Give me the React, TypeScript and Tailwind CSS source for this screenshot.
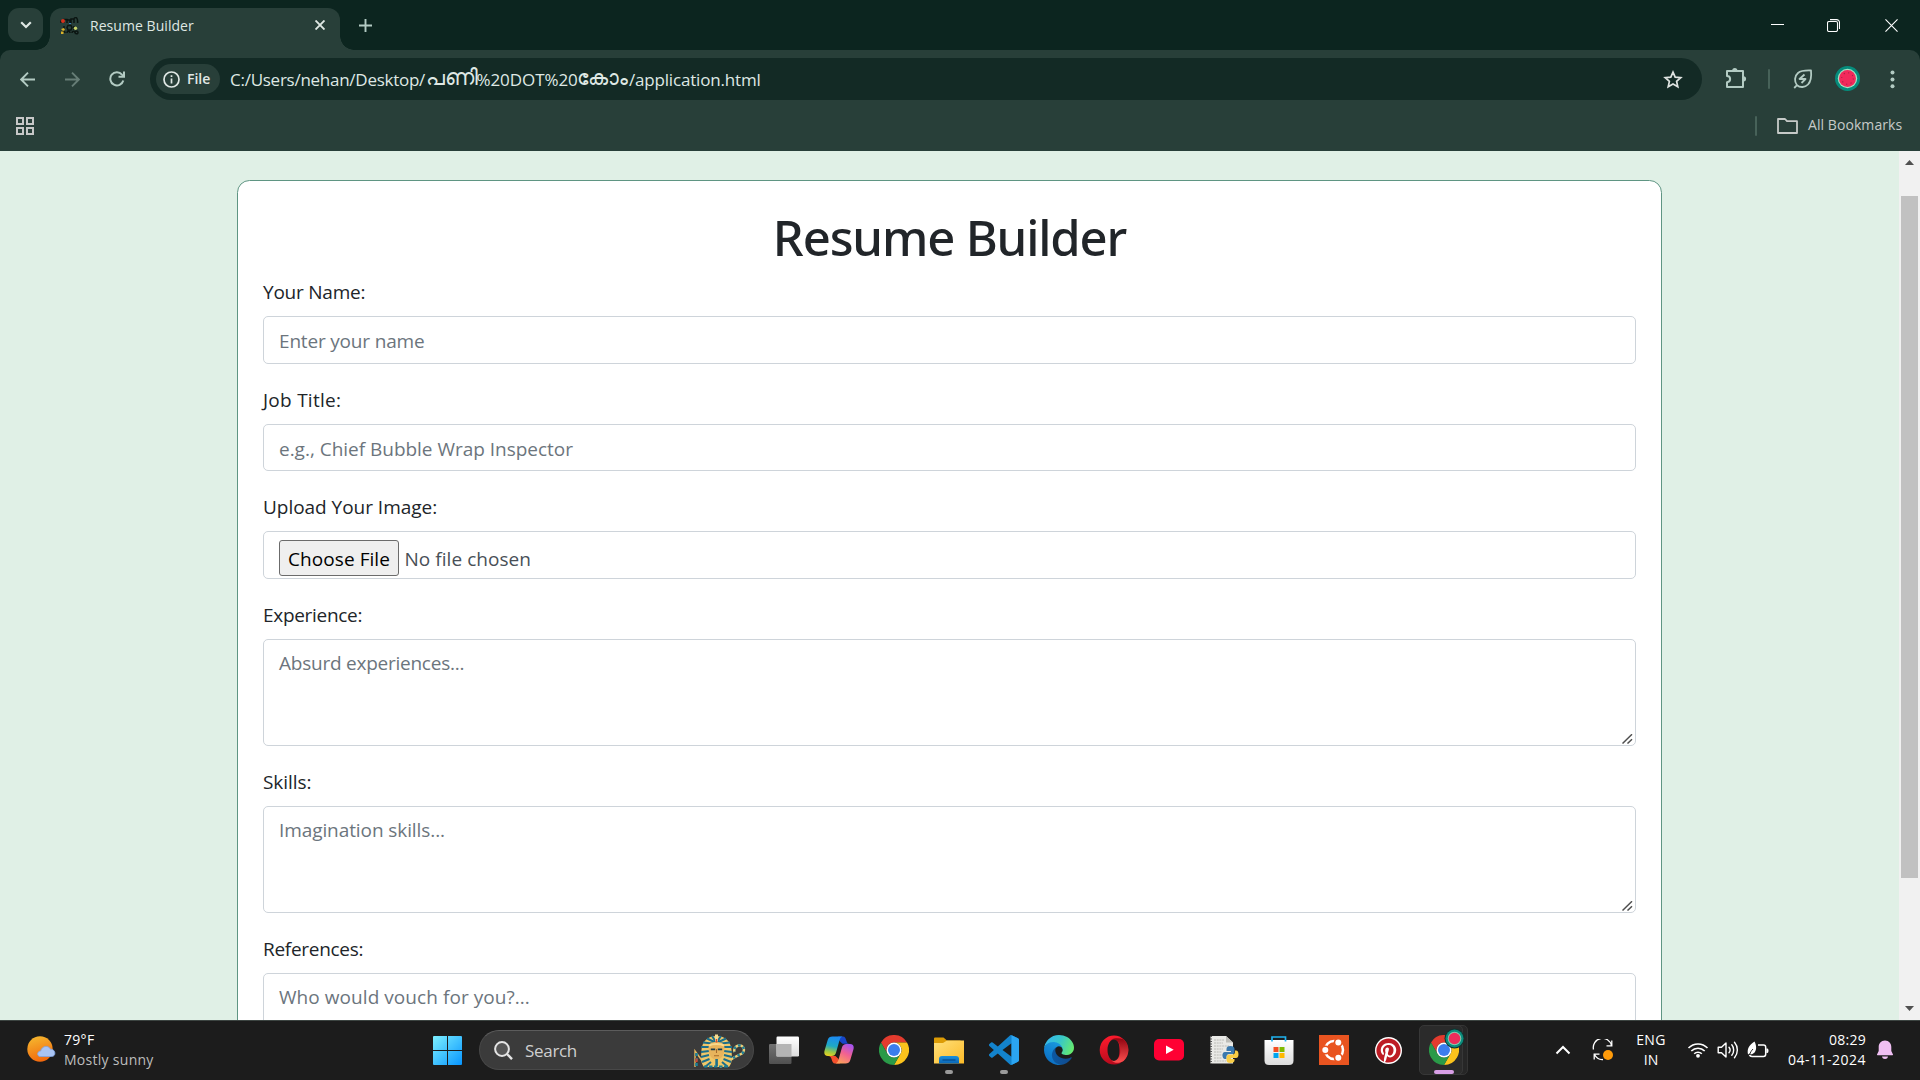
import type { ReactNode } from 'react';
import { FaPinterest } from 'react-icons/fa';

function ChromeLogo({ size }: { size: number }) {
  return (
    <svg width={size} height={size} viewBox="0 0 48 48">
      <path d="M3.2 12A24 24 0 0 1 44.8 12L24 12A12 12 0 0 0 13.6 30Z" fill="#e33b2e" />
      <path d="M44.8 12A24 24 0 0 1 24 48L34.4 30A12 12 0 0 0 24 12Z" fill="#fcc31c" />
      <path d="M24 48A24 24 0 0 1 3.2 12L13.6 30A12 12 0 0 0 34.4 30Z" fill="#2a9a48" />
      <circle cx="24" cy="24" r="12" fill="#fff" />
      <circle cx="24" cy="24" r="9.6" fill="#3b7ded" />
    </svg>
  );
}

function Favicon() {
  return (
    <svg width="20" height="18" viewBox="0 0 20 18" fill="none">
      <path d="M1 6V3.500M4 6V2.500h3V6M7 3h3v3M11 6V2h3v4M14 1.500c2-2 4-1 3.600 4.500M8 8.500h3l1 2-1 2.500H8l-1-2.500zM4 9v4M14 9v4M2 16c0-2.500 3-2.500 3 0M7 16c0-2.500 3-2.500 3 0M12 16c0-2.500 3-2.500 3 0M15 15.500c0-2 3-2 3 0s-3 1.500-3 0" stroke="#0b1512" strokeWidth="1.500" />
      <circle cx="3" cy="4" r="2" fill="#d4321d" />
      <path d="M9 6.500h2" stroke="#3b7fc4" strokeWidth="1.200" />
      <circle cx="15.500" cy="11.200" r="1.700" fill="#c7d36b" />
      <path d="M1 12l3-1 1 2-2 1zM1 14.500h2.500V17H1z" fill="#d9b32a" />
    </svg>
  );
}

function TitleBar() {
  return (
    <div className="flex h-[50px] items-start bg-[#0c251f]">
      <div className="ml-2 mt-2 flex h-[34px] w-[35px] items-center justify-center rounded-[11px] bg-[#283f39]">
        <svg width="12" height="8" viewBox="0 0 12 8" fill="none" stroke="#dfe8e4" strokeWidth="2.200">
          <path d="M1.200 1.200L6 6L10.800 1.200" />
        </svg>
      </div>
      <div className="relative ml-[7px] mt-2 flex h-[42px] w-[290px] items-center rounded-t-[12px] bg-[#283f39] pb-[7px] pl-[10px]">
        <span className="absolute -left-[14px] bottom-0 h-[14px] w-[14px] bg-[radial-gradient(circle_at_0_0,transparent_13.500px,#283f39_14px)]" />
        <span className="absolute -right-[14px] bottom-0 h-[14px] w-[14px] bg-[radial-gradient(circle_at_100%_0,transparent_13.500px,#283f39_14px)]" />
        <Favicon />
        <span className="ml-[10px] whitespace-nowrap text-[14px] leading-[20px] tracking-[0.05px] text-[#dfe7e3]">Resume Builder</span>
        <svg className="absolute left-[265px] top-[12px]" width="10" height="10" viewBox="0 0 10 10" stroke="#dfe8e4" strokeWidth="1.900">
          <path d="M0.500 0.500L9.500 9.500M9.500 0.500L0.500 9.500" />
        </svg>
      </div>
      <svg className="ml-[19px] mt-[18.500px]" width="13" height="13" viewBox="0 0 13 13" stroke="#b3cbc3" strokeWidth="1.900">
        <path d="M6.500 0V13M0 6.500H13" />
      </svg>
      <div className="ml-auto flex items-center pr-[22px] pt-[18px]">
        <svg className="mr-[43px]" width="13" height="14" viewBox="0 0 13 14"><path d="M0 6.500H13" stroke="#fff" /></svg>
        <svg className="mr-[45px]" width="13" height="13" viewBox="0 0 13 13" fill="none" stroke="#fff" strokeWidth="1.100">
          <rect x="0.500" y="2.500" width="10" height="10" rx="1.500" />
          <path d="M3 0.600h6.500a3 3 0 0 1 3 3V10" />
        </svg>
        <svg width="13" height="13" viewBox="0 0 14 14" stroke="#fff" strokeWidth="1.200"><path d="M0.500 0.500L13.500 13.500M13.500 0.500L0.500 13.500" /></svg>
      </div>
    </div>
  );
}

function AddressBar() {
  return (
    <div className="flex h-[58px] items-center">
      <svg className="ml-5" width="15" height="15" viewBox="0 0 15 15" fill="none" stroke="#b3cbc3" strokeWidth="1.900"><path d="M15 7.500H1.500M8 0.700L1.200 7.500L8 14.300" /></svg>
      <svg className="ml-[30px]" width="15" height="15" viewBox="0 0 15 15" fill="none" stroke="#667d76" strokeWidth="1.900"><path d="M0 7.500H13.500M7 0.700L13.800 7.500L7 14.300" /></svg>
      <svg className="ml-[29px] mt-[-1px]" width="16" height="16" viewBox="0 0 16 16" fill="none" stroke="#b3cbc3" strokeWidth="2">
        <path d="M14.300 9.500A6.600 6.600 0 1 1 13 3.600L14.500 5.300" />
        <path d="M15 0.500V5.800H9.500" />
      </svg>
      <div className="ml-[25px] flex h-[42px] w-[1552px] items-center rounded-full bg-[#132a25] pl-[6px] pr-[19px]">
        <div className="flex h-[30px] w-[64px] items-center rounded-full bg-[#283f39] pl-[7px]">
          <svg width="17" height="17" viewBox="0 0 17 17" fill="none" stroke="#e0e8e5" strokeWidth="1.700">
            <circle cx="8.500" cy="8.500" r="7.500" /><path d="M8.500 7.500V12.500M8.500 4.200V6" />
          </svg>
          <span className="ml-[7px] mt-[-1px] text-[14px] font-semibold leading-[20px] text-[#e0e8e5]">File</span>
        </div>
        <div className="ml-[10px] mt-px flex h-[30px] items-center whitespace-nowrap text-[17px] leading-[30px] text-[#dfe8e4]">
          <span className="w-[195.500px] tracking-[-0.260px]">C:/Users/nehan/Desktop/</span>
          <span className="mt-[-6px] w-[51px] text-[21.500px] font-light leading-[30px]">പണി</span>
          <span className="w-[100.500px] tracking-[-0.080px]">%20DOT%20</span>
          <span className="mt-[-6px] w-[52px] text-[21px] font-light leading-[30px]">കോം</span>
          <span className="tracking-[-0.180px]">/application.html</span>
        </div>
        <svg className="ml-auto" width="20" height="19" viewBox="0 0 20 19" fill="none" stroke="#dfe3e1" strokeWidth="1.700">
          <path d="M10 2.200L12.200 7.200L17.800 7.700L13.600 11.400L14.800 16.800L10 14L5.200 16.800L6.400 11.400L2.200 7.700L7.800 7.200Z" />
        </svg>
      </div>
      <svg className="ml-[23px] mt-[-2px]" width="22" height="22" viewBox="0 0 22 22" fill="none" stroke="#b3cbc3" strokeWidth="2" strokeLinejoin="round">
        <path d="M2 4H18V20H2V15.200C6.200 15 6.200 9.200 2 9Z" />
        <path d="M7.200 3.500a2.600 2.600 0 0 1 5.200 0zM18.500 9.200a2.600 2.600 0 0 1 0 5.200z" fill="#b3cbc3" stroke="none" />
      </svg>
      <div className="ml-[21px] h-5 w-[2px] rounded bg-[#476259]" />
      <svg className="ml-[23px]" width="20" height="20" viewBox="0 0 20 20" fill="none" stroke="#b3cbc3" strokeWidth="1.800" strokeLinejoin="round">
        <path d="M1.200 19L4 16.200M4 16.200C1 12.500 1.500 7 5 4C8 1.500 13 1.300 18 1.500C18.500 6.500 18.300 12 15 15.500C12 18.600 7 18.800 4 16.200Z" />
        <path d="M11.500 5.500L6.500 10H12.500L8.500 14" />
      </svg>
      <svg className="ml-[22px] mt-[-1px]" width="25" height="25" viewBox="0 0 25 25">
        <circle cx="12.500" cy="12.500" r="12.500" fill="#058c7c" />
        <circle cx="12.500" cy="12.500" r="9.700" fill="#a6e3c4" />
        <circle cx="12.500" cy="12.500" r="8.500" fill="#f2295b" />
        <circle cx="12.500" cy="12.500" r="5.800" fill="none" stroke="#a82049" strokeWidth="1.100" strokeDasharray="1.100 3.450" />
      </svg>
      <svg className="ml-[30px]" width="5" height="19" viewBox="0 0 5 19" fill="#b3cbc3"><circle cx="2.500" cy="2.500" r="2" /><circle cx="2.500" cy="9.500" r="2" /><circle cx="2.500" cy="16.300" r="2" /></svg>
    </div>
  );
}

function BookmarksBar() {
  return (
    <div className="flex h-[43px] items-center pb-[9px] pl-[15.500px] pr-[18px]">
      <svg className="mt-[1px]" width="18" height="18" viewBox="0 0 18 18" fill="none" stroke="#c6c7c7" strokeWidth="2">
        <path d="M1 1h6v6H1zM11 1h6v6h-6zM1 11h6v6H1zM11 11h6v6h-6z" />
      </svg>
      <div className="ml-auto mt-[2px] h-5 w-[2px] rounded bg-[#476259]" />
      <svg className="ml-5 mt-[2px]" width="21" height="16" viewBox="0 0 21 16" fill="none" stroke="#c6cac8" strokeWidth="1.800" strokeLinejoin="round"><path d="M1 1H8L10 3.200H20V15H1Z" /></svg>
      <span className="ml-[10px] w-[94px] whitespace-nowrap text-[14px] leading-[20px] tracking-[0.070px] text-[#c6cac8]">All Bookmarks</span>
    </div>
  );
}

function Field({ label, track, children }: { label: string; track: string; children: ReactNode }) {
  return (
    <div className="mb-5">
      <div className={`mb-[10px] h-[30px] whitespace-nowrap leading-[32px] ${track}`}>{label}</div>
      {children}
    </div>
  );
}

function Input({ text, track }: { text: string; track: string }) {
  return (
    <div className="h-[47.500px] rounded-[5px] border border-[#ced4da] px-[15px] pt-[9px]">
      <div className={`h-[30px] whitespace-nowrap leading-[30px] text-[#6c757d] ${track}`}>{text}</div>
    </div>
  );
}

function Area({ text, track }: { text: string; track: string }) {
  return (
    <div className="flex h-[107px] justify-between rounded-[5px] border border-[#ced4da] pb-px pl-[15px] pr-[2px] pt-2">
      <div className={`h-[30px] whitespace-nowrap leading-[31px] text-[#6c757d] ${track}`}>{text}</div>
      <svg className="self-end" width="11" height="10" viewBox="0 0 11 10" stroke="#4f4f4f" strokeWidth="1.500">
        <path d="M0.500 9.500L10 0.300M5.500 9.500L10 5.200" />
      </svg>
    </div>
  );
}

function Page() {
  return (
    <div className="flex h-[869px] bg-[#e0f0e6]">
      <div className="h-full w-[1899px] overflow-hidden pl-[237px] pt-[29px]">
        <div className="h-[1100px] w-[1425px] rounded-[12.500px] border border-[#5f9583] bg-white p-[25px] text-[19px] text-[#212529]">
          <h1 className="mb-[10.300px] h-[60px] whitespace-nowrap text-center font-['Noto_Sans',sans-serif] text-[49px] font-medium leading-[62px] tracking-[-1.150px]">Resume Builder</h1>
          <Field label="Your Name:" track="tracking-[-0.230px]"><Input text="Enter your name" track="tracking-[-0.180px]" /></Field>
          <Field label="Job Title:" track="tracking-[0.260px]"><Input text="e.g., Chief Bubble Wrap Inspector" track="tracking-[-0.020px]" /></Field>
          <Field label="Upload Your Image:" track="tracking-[-0.030px]">
            <div className="flex h-[47.500px] items-start rounded-[5px] border border-[#ced4da] px-[15px] pt-2">
              <div className="h-[36px] w-[120px] whitespace-nowrap rounded-[3px] border border-[#6b6b6b] bg-[#efefef] text-center leading-[36px] tracking-[0.070px] text-black">Choose File</div>
              <div className="ml-[5.500px] whitespace-nowrap leading-[38px] tracking-[0.050px] text-[#495057]">No file chosen</div>
            </div>
          </Field>
          <Field label="Experience:" track="tracking-[-0.300px]"><Area text="Absurd experiences..." track="tracking-[-0.240px]" /></Field>
          <Field label="Skills:" track="tracking-[-0.060px]"><Area text="Imagination skills..." track="tracking-[-0.090px]" /></Field>
          <Field label="References:" track="tracking-[-0.290px]"><Area text="Who would vouch for you?..." track="tracking-[0.060px]" /></Field>
        </div>
      </div>
      <div className="flex w-[21px] flex-col items-center bg-[#f1f1f1]">
        <svg className="mt-[9px]" width="9" height="5" viewBox="0 0 9 5" fill="#505050"><path d="M0 5L4.500 0L9 5Z" /></svg>
        <div className="mt-[31px] h-[682px] w-[17px] bg-[#c1c1c1]" />
        <svg className="mt-[128px]" width="9" height="5" viewBox="0 0 9 5" fill="#505050"><path d="M0 0L4.500 5L9 0Z" /></svg>
      </div>
    </div>
  );
}

function Pharaoh() {
  return (
    <svg width="52" height="34" viewBox="0 0 52 34" fill="none">
      <path d="M1 33V17L12 32" stroke="#e3b85f" strokeWidth="1.400" />
      <path d="M2.500 19v13" stroke="#1d7f97" strokeWidth="2.600" strokeDasharray="3 2" />
      <path d="M2.500 24.500v3.500" stroke="#d1462f" strokeWidth="2.200" />
      <path d="M26 33L40 23.500L48 19.500C52 16 49 10.500 44.500 11.500C41.500 12.300 39.500 15 40.500 18" stroke="#f0cf78" strokeWidth="2.400" />
      <path d="M35 27L40 23.500L48 19.500C52 16 49 10.500 44.500 11.500C41.500 12.300 39.500 15 40.500 18" stroke="#1d7f97" strokeWidth="2.400" strokeDasharray="2.500 2.500" />
      <path d="M22.500 2C13.500 2 8 8 7.500 16C7.200 22 6 28 10 33H35C39 28 37.800 22 37.500 16C37 8 31.500 2 22.500 2Z" fill="#efc768" />
      <path d="M22.500 10L9 8.500M22.500 9L13 4.500M22 8L18 2M23 8L27 2M22.500 9L32 4.500M22.500 10L36 8.500M15 13L7 13M15 17L7 18M15 21L7 23M15.500 25L8 28M17 28L11 33M30 13L38 13M30 17L38 18M30 21L38 23M29.500 25L37 28M28 28L34 33" stroke="#1b6f8c" strokeWidth="2" />
      <path d="M14.500 14C14.500 9.500 17.500 8 22.500 8S30.500 9.500 30.500 14C30.500 20 28 25.500 22.500 25.500S14.500 20 14.500 14Z" fill="#e8b45c" />
      <path d="M15 11.500c4-2 11-2 15 0" stroke="#f7d98c" strokeWidth="2" />
      <path d="M16.800 15.300h4.400M23.800 15.300h4.400" stroke="#183c4c" strokeWidth="1.700" />
      <path d="M22.500 15v4M20 21.700h5" stroke="#a56a2a" strokeWidth="1.100" />
      <path d="M21.300 25h2.600v7h-2.600z" fill="#1b6f8c" />
      <path d="M22.500 0.500v7" stroke="#f6dc92" strokeWidth="3" />
      <path d="M22.500 5v3.500" stroke="#d1462f" strokeWidth="1.600" />
      <path d="M10 32.500H35" stroke="#1d7f97" strokeWidth="2" strokeDasharray="3.500 1.500" />
    </svg>
  );
}

function Cell({ children, open }: { children: ReactNode; open?: boolean }) {
  return (
    <div className="relative flex h-[60px] w-[55px] items-center justify-center">
      {children}
      {open && <span className="absolute bottom-[6px] left-[24px] h-1 w-2 rounded-full bg-[#9a9a9a]" />}
    </div>
  );
}

function Apps() {
  return (
    <div className="ml-[2px] flex">
      <Cell>
        <svg width="30" height="30" viewBox="0 0 30 30">
          <defs>
            <linearGradient id="tv" x1="0" y1="0" x2="0" y2="1"><stop offset="0" stopColor="#fff" /><stop offset="1" stopColor="#dcdcdc" /></linearGradient>
            <linearGradient id="tv2" x1="0" y1="0" x2="0" y2="1"><stop offset="0" stopColor="#737373" /><stop offset="1" stopColor="#505050" /></linearGradient>
          </defs>
          <rect x="0" y="9" width="22.500" height="20" rx="1.200" fill="url(#tv2)" />
          <rect x="7.500" y="1.500" width="22.500" height="20" rx="1.200" fill="url(#tv)" />
          <path d="M7.500 9h15v12.500h-15z" fill="#b4b4b4" />
        </svg>
      </Cell>
      <Cell>
        <svg width="30" height="30" viewBox="0 0 30 30">
          <defs>
            <linearGradient id="cp1" x1="0.300" y1="0" x2="0.100" y2="1"><stop offset="0" stopColor="#1c8df0" /><stop offset="0.450" stopColor="#1fa9c4" /><stop offset="0.750" stopColor="#9cc944" /><stop offset="1" stopColor="#f3d21b" /></linearGradient>
            <linearGradient id="cp2" x1="0.800" y1="0" x2="0.300" y2="1"><stop offset="0" stopColor="#a353f2" /><stop offset="0.500" stopColor="#f26191" /><stop offset="1" stopColor="#fba05c" /></linearGradient>
          </defs>
          <path d="M14 1.500H19C21 1.500 21.700 3.500 22.300 5.500C23 7.800 23.600 8.800 26 8.800H18.500L15.500 6Z" fill="#1746c9" />
          <path d="M16 28.500H11C9 28.500 8.300 26.500 7.700 24.500C7 22.200 6.400 21 4 21H11.500L14.500 24Z" fill="#f4502c" />
          <path d="M8.500 1.500H18.500C16.500 2 15.800 4 15 7L12.200 17C11.300 20 10 21 7.500 21H4C0.500 21 -0.200 18.500 0.600 15.500L3.700 5C4.600 2.400 6 1.500 8.500 1.500Z" fill="url(#cp1)" />
          <path d="M21.500 28.500H11.500C13.500 28 14.200 26 15 23L17.800 13C18.700 10 20 9 22.500 9H26C29.500 9 30.200 11.500 29.400 14.500L26.300 25C25.400 27.600 24 28.500 21.500 28.500Z" fill="url(#cp2)" />
        </svg>
      </Cell>
      <Cell><ChromeLogo size={30} /></Cell>
      <Cell open>
        <svg width="30" height="30" viewBox="0 0 30 30">
          <defs>
            <linearGradient id="fe" x1="0" y1="0" x2="1" y2="1"><stop offset="0" stopColor="#ffe07a" /><stop offset="1" stopColor="#fcba28" /></linearGradient>
            <linearGradient id="fe2" x1="0" y1="0" x2="0" y2="1"><stop offset="0" stopColor="#1a90dd" /><stop offset="1" stopColor="#0b66b5" /></linearGradient>
          </defs>
          <path d="M0 3.500Q0 2.500 1 2.500H9.500L13 5.500H26Q28 5.500 28 8V12H0Z" fill="#dd9c05" />
          <path d="M0 8H9L13 5.500H30V28.500H0Z" fill="url(#fe)" />
          <path d="M5 28.500V24Q5 21 8 21H22Q25 21 25 24V28.500Z" fill="url(#fe2)" />
          <path d="M8.500 25H21.500" stroke="#06498c" strokeWidth="1.200" />
        </svg>
      </Cell>
      <Cell open>
        <svg width="30" height="30" viewBox="0 0 24 24">
          <path fill="#1383cc" d="M23.150 2.587L18.210.210a1.494 1.494 0 0 0-1.705.290l-9.460 8.630-4.120-3.128a.999.999 0 0 0-1.276.057L.327 7.261A1 1 0 0 0 .326 8.740L3.899 12 .326 15.260a1 1 0 0 0 .001 1.479L1.650 17.940a.999.999 0 0 0 1.276.057l4.120-3.128 9.460 8.630a1.492 1.492 0 0 0 1.704.290l4.942-2.377A1.500 1.500 0 0 0 24 20.060V3.939a1.500 1.500 0 0 0-.850-1.352zm-5.146 14.861L10.826 12l7.178-5.448v10.896z" />
          <path fill="#2ba5f2" d="M18 .120L23.150 2.587A1.500 1.500 0 0 1 24 3.939V20.060a1.500 1.500 0 0 1-.850 1.350L18 23.900Z" />
        </svg>
      </Cell>
      <Cell>
        <svg width="30" height="30" viewBox="4.630 4.920 256 256">
          <defs>
            <linearGradient id="ed1" x1="0" y1="0.500" x2="1" y2="0.500"><stop offset="0" stopColor="#0c59a4" /><stop offset="1" stopColor="#114a8b" /></linearGradient>
            <linearGradient id="ed2" x1="0.800" y1="0" x2="0.300" y2="1"><stop offset="0" stopColor="#1b9de2" /><stop offset="0.500" stopColor="#1284d3" /><stop offset="1" stopColor="#0b6cc0" /></linearGradient>
            <linearGradient id="ed3" x1="0" y1="0.300" x2="1" y2="0.600"><stop offset="0" stopColor="#35b8f1" /><stop offset="0.500" stopColor="#38c7c8" /><stop offset="1" stopColor="#66eb6e" /></linearGradient>
          </defs>
          <path fill="url(#ed1)" d="M235.680 195.460a93.730 93.730 0 0 1-10.540 4.710 101.870 101.870 0 0 1-35.900 6.460c-47.320 0-88.540-32.550-88.540-74.320A31.480 31.480 0 0 1 117.130 105c-42.800 1.800-53.800 46.400-53.800 72.530 0 73.880 68.090 81.370 82.760 81.370 7.910 0 19.840-2.300 27-4.560l1.310-.440a128.340 128.340 0 0 0 66.600-52.800 4 4 0 0 0-5.320-5.640z" />
          <path fill="url(#ed2)" d="M110.340 246.340A79.200 79.200 0 0 1 87.600 225a80.720 80.720 0 0 1 29.530-120c3.120-1.470 8.450-4.130 15.540-4a32.350 32.350 0 0 1 25.690 13 31.880 31.880 0 0 1 6.360 18.660c0-.210 24.460-79.600-80-79.600-43.900 0-80 41.660-80 78.210a130.150 130.150 0 0 0 12.110 56 128 128 0 0 0 156.380 67.110 75.550 75.550 0 0 1-62.780-8z" />
          <path fill="url(#ed3)" d="M156.940 153.780c-.810 1.050-3.300 2.500-3.300 5.660 0 2.610 1.700 5.120 4.720 7.230 14.380 10 41.490 8.680 41.560 8.680a59.560 59.560 0 0 0 30.270-8.350 61.380 61.380 0 0 0 30.430-52.880c.260-22.410-8-37.310-11.340-43.910C228.090 28.760 182.350 4.920 132.610 4.920a128 128 0 0 0-128 126.200c.480-36.540 36.800-66.050 80-66.050 3.500 0 23.460.340 42 10.070 16.340 8.580 24.900 18.940 30.850 29.210 6.180 10.670 7.280 24.150 7.280 29.520s-2.740 13.330-7.800 19.910z" />
        </svg>
      </Cell>
      <Cell>
        <svg width="30" height="30" viewBox="0 0 30 30">
          <defs>
            <linearGradient id="op1" x1="0.300" y1="0" x2="0.500" y2="1"><stop offset="0" stopColor="#ff1b2d" /><stop offset="1" stopColor="#b50a1c" /></linearGradient>
            <linearGradient id="op2" x1="0" y1="0" x2="0" y2="1"><stop offset="0" stopColor="#8f0410" /><stop offset="1" stopColor="#ff5050" /></linearGradient>
          </defs>
          <path fillRule="evenodd" fill="url(#op1)" d="M15 0.500A14.300 14.500 0 1 0 15 29.500A14.300 14.500 0 1 0 15 0.500ZM15.500 4C19.500 4 20.500 10 20.500 15S19.500 26 15.500 26S8.500 21 8.500 15S11.500 4 15.500 4Z" />
          <path fill="url(#op2)" d="M12 4.800C16 2.500 20.500 3 24.500 4.200A14.300 14.500 0 0 1 24.500 26C20.500 28.500 15.500 28.500 12.500 25.500C17.500 27.500 21.500 22 21.500 15S17.500 3 12 4.800Z" />
        </svg>
      </Cell>
      <Cell>
        <svg width="30" height="22" viewBox="0 0 30 22"><rect width="30" height="21.500" rx="5" fill="#ff0033" /><path d="M12 6.500L19.700 10.800L12 15Z" fill="#fff" /></svg>
      </Cell>
      <Cell>
        <svg width="30" height="30" viewBox="0 0 30 30">
          <path d="M1.500 1H17L24 7.500V28.500H1.500Z" fill="#e9e9e6" />
          <path d="M17 1L24 7.500H17Z" fill="#bdbdb8" />
          <path d="M2 1V29" stroke="#555" strokeWidth="2" strokeDasharray="1 1.500" />
          <path d="M5 5H15M5 8H14M5 11H20M5 14H14M5 17H13M5 20H14M5 23H13M5 26H17" stroke="#b5b5b1" strokeWidth="0.900" strokeDasharray="2 0.700" />
          <path d="M21.500 11C18.500 11 17.500 12 17.500 14V16H22V17H16C14 17 13.500 18.500 13.500 20.500S14.500 24 16 24H17.500V22C17.500 20 18.500 19 20.500 19H23.500C25 19 25.500 18 25.500 17V14C25.500 12 24 11 21.500 11Z" fill="#3b79ad" />
          <path d="M21.500 28C18.700 28 17.500 27 17.500 25V22.500C17.500 20.500 18.500 19.500 20.500 19.500H23.500C25 19.500 26 18.500 26 17V15.500H27C28.700 15.500 29.500 17 29.500 19.200S28.700 23 27 23H22V24H25.500V25.500C25.500 27 24 28 21.500 28Z" fill="#f8cd45" />
        </svg>
      </Cell>
      <Cell>
        <svg width="30" height="30" viewBox="0 0 30 30">
          <defs><linearGradient id="ms" x1="0" y1="0" x2="0" y2="1"><stop offset="0" stopColor="#fff" /><stop offset="1" stopColor="#dcdcdc" /></linearGradient></defs>
          <path d="M0.500 5H29.500V25.500Q29.500 30 25 30H5Q0.500 30 0.500 25.500Z" fill="url(#ms)" />
          <path d="M8 6.500V2H21.500V6.500" fill="none" stroke="#1fb2ee" strokeWidth="1.700" />
          <path fill="#f25022" d="M9.500 12h5v5h-5z" /><path fill="#7fba00" d="M15.500 12h5v5h-5z" />
          <path fill="#00a4ef" d="M9.500 18h5v5h-5z" /><path fill="#ffb900" d="M15.500 18h5v5h-5z" />
        </svg>
      </Cell>
      <Cell>
        <svg width="30" height="30" viewBox="0 0 30 30">
          <rect width="30" height="30" fill="#e95420" />
          <circle cx="15" cy="15" r="9" fill="none" stroke="#fff" strokeWidth="2.500" />
          <g fill="#fff" stroke="#e95420" strokeWidth="1.600">
            <circle cx="6.300" cy="15" r="3.800" /><circle cx="19.300" cy="7.500" r="3.800" /><circle cx="19.300" cy="22.700" r="3.800" />
          </g>
        </svg>
      </Cell>
      <Cell>
        <div className="flex h-[27px] w-[27px] items-center justify-center rounded-full bg-white"><FaPinterest size={25} color="#bd1c24" /></div>
      </Cell>
      <div className="relative flex h-[60px] w-[55px] items-center justify-center">
        <span className="absolute left-[11px] top-[5px] h-[50px] w-[41px] rounded-[5px] border border-[#343434] bg-[#262626]" />
        <span className="absolute left-[3px] top-[5px] h-[50px] w-[44px] rounded-[5px] border border-[#373737] bg-[#2b2b2b]" />
        <div className="relative"><ChromeLogo size={30} /></div>
        <svg className="absolute left-[28px] top-[8px]" width="21" height="21" viewBox="0 0 21 21">
          <circle cx="10.500" cy="10.500" r="10" fill="#12322f" /><circle cx="10.500" cy="10.500" r="9" fill="#0b8d7d" /><circle cx="10.500" cy="10.500" r="6.800" fill="#86c9ae" /><circle cx="10.500" cy="10.500" r="5.800" fill="#ec2c5b" />
        </svg>
        <span className="absolute bottom-[6px] left-[18px] h-1 w-5 rounded-full bg-[#d89fe6]" />
      </div>
    </div>
  );
}

function Taskbar() {
  return (
    <div className="flex h-[60px] items-center bg-[#1c1c1c] shadow-[inset_0_1px_0_#3c4441]">
      <div className="flex w-[433px] items-center pl-[27px]">
        <svg className="mt-[-2px]" width="29" height="26" viewBox="0 0 29 26">
          <defs><linearGradient id="sun" x1="0.300" y1="0" x2="0.600" y2="1"><stop offset="0" stopColor="#f5b62e" /><stop offset="1" stopColor="#f2660c" /></linearGradient></defs>
          <circle cx="13" cy="13" r="12.700" fill="url(#sun)" />
          <path d="M13.500 20.500C9.500 20.500 9.800 15 13.700 15C14.500 10 21.500 8.500 23.500 13.300C28.800 13 29.500 20.500 24.500 20.500Z" fill="#a9c4f4" stroke="#7fa3e4" strokeWidth="0.800" />
        </svg>
        <div className="ml-2 flex flex-col whitespace-nowrap text-[14px] leading-5">
          <span className="tracking-[0.300px] text-white">79°F</span>
          <span className="tracking-[0.280px] text-[#bcbcbc]">Mostly sunny</span>
        </div>
      </div>
      <svg width="29" height="29" viewBox="0 0 29 29">
        <defs><linearGradient id="win" gradientUnits="userSpaceOnUse" x1="0" y1="0" x2="29" y2="29"><stop offset="0" stopColor="#7df0ff" /><stop offset="1" stopColor="#0795ff" /></linearGradient></defs>
        <path fill="url(#win)" d="M1 0H14V14H0V1Q0 0 1 0ZM15 0H28Q29 0 29 1V14H15ZM0 15H14V29H1Q0 29 0 28ZM15 15H29V28Q29 29 28 29H15Z" />
      </svg>
      <div className="ml-[17px] flex h-10 w-[275px] items-center rounded-full border border-[#484848] border-t-[#5c5c5c] bg-[#3b3b3b] pl-[14px] pr-[7px]">
        <svg width="19" height="19" viewBox="0 0 19 19" fill="none" stroke="#e4e4e4" strokeWidth="2"><circle cx="8" cy="8" r="6.900" fill="#555" /><path d="M13 13L18 18.200" strokeWidth="2.400" /></svg>
        <span className="ml-[12px] mt-[2px] whitespace-nowrap text-[17px] leading-6 tracking-[-0.310px] text-[#cfcfcf]">Search</span>
        <div className="ml-auto mt-[2px]"><Pharaoh /></div>
      </div>
      <Apps />
      <div className="ml-auto flex items-center pr-[26px]">
        <svg width="16" height="10" viewBox="0 0 16 10" fill="none" stroke="#fff" strokeWidth="2"><path d="M1.500 8.500L8 2L14.500 8.500" /></svg>
        <svg className="ml-[21px]" width="22" height="22" viewBox="0 0 22 22" fill="none" stroke="#fff" strokeWidth="1.300">
          <path d="M1.500 10.500A9 9 0 0 1 19.500 6.500M19.800 1.500V6.800H14.500M11 20.500C7 20.800 4 18.500 2.500 15.500M2.200 20.500V15.200H7.500" />
          <circle cx="16" cy="16" r="5" fill="#ff9b0a" stroke="none" />
        </svg>
        <div className="ml-[22px] flex w-[30px] flex-col items-center whitespace-nowrap text-[14px] leading-5 text-white">
          <span className="tracking-[0.400px]">ENG</span><span>IN</span>
        </div>
        <svg className="ml-[21px]" width="22" height="18" viewBox="0 0 22 18" fill="none" stroke="#fff" strokeWidth="1.600">
          <path d="M1.500 7A13.200 13.200 0 0 1 20.500 7M4.300 10A9.400 9.400 0 0 1 17.700 10M7.200 12.800A5.400 5.400 0 0 1 14.800 12.800" />
          <circle cx="11" cy="14.800" r="1.900" fill="#fff" stroke="none" />
        </svg>
        <svg className="ml-2" width="22" height="18" viewBox="0 0 22 18" fill="none" stroke="#fff" strokeWidth="1.400" strokeLinejoin="round">
          <path d="M1.200 6.300H4.500L9 2V16L4.500 11.700H1.200Z" />
          <path d="M12 6.200C13.300 7.800 13.300 10.200 12 11.800M14.800 3.800C17.300 6.800 17.300 11.200 14.800 14.200M17.500 1.300C21.300 5.800 21.300 12.200 17.500 16.700" strokeLinecap="round" />
        </svg>
        <svg className="ml-2 mt-[-1px]" width="22" height="18" viewBox="0 0 22 18">
          <path d="M11 4H16.500Q18.700 4 18.700 6.200V13.300Q18.700 15.500 16.500 15.500H5Q3 15.500 2.500 13.800" fill="none" stroke="#fff" strokeWidth="1.500" />
          <path d="M19.400 7.500H20.500Q21.500 8 21.500 9.800T20.500 12H19.400Z" fill="#fff" />
          <path d="M1 13.500C0 8 1.500 4.500 7.500 0.500C10 5 10 11.500 5 13.200C3.500 13.500 3 13 2.500 12.500Z" fill="#fff" />
          <path d="M2.500 14C3.500 11 4.500 9.500 6 8" stroke="#1c1c1c" fill="none" strokeWidth="0.900" />
        </svg>
        <div className="flex w-[97px] flex-col items-end whitespace-nowrap text-[14px] leading-5 text-white">
          <span className="tracking-[0.260px]">08:29</span><span className="tracking-[0.500px]">04-11-2024</span>
        </div>
        <svg className="ml-[10px]" width="18" height="20" viewBox="0 0 18 20" fill="#f0bff3">
          <path d="M9 0.500C5 0.500 2.700 3.500 2.700 7V11L1 14.500Q0.800 15.300 1.600 15.300H16.400Q17.200 15.300 17 14.500L15.300 11V7C15.300 3.500 13 0.500 9 0.500Z" />
          <path d="M6 16.500H12C11.600 18.300 10.500 19 9 19S6.400 18.300 6 16.500Z" />
        </svg>
      </div>
    </div>
  );
}

export default function App() {
  return (
    <div className="h-[1080px] w-[1920px] overflow-hidden bg-[#0c251f] font-['Open_Sans','Noto_Sans',sans-serif]">
      <TitleBar />
      <div className="h-[101px] rounded-t-[10px] bg-[#283f39]">
        <AddressBar />
        <BookmarksBar />
      </div>
      <Page />
      <Taskbar />
    </div>
  );
}
